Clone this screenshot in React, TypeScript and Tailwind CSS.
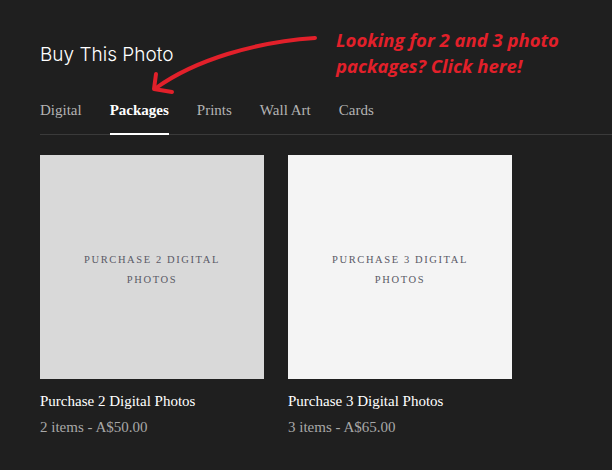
import React from "react";

const tabs = ["Digital", "Packages", "Prints", "Wall Art", "Cards"];

const products = [
  { label: ["PURCHASE 2 DIGITAL", "PHOTOS"], title: "Purchase 2 Digital Photos", price: "2 items - A$50.00", bg: "bg-[#d9d9d9]" },
  { label: ["PURCHASE 3 DIGITAL", "PHOTOS"], title: "Purchase 3 Digital Photos", price: "3 items - A$65.00", bg: "bg-[#f4f4f4]" },
];

export default function App() {
  return (
    <div className="relative w-[612px] h-[470px] overflow-hidden bg-[#1f1f1f]">
      <div className="pl-[40px] pt-[42px]">
        <h1 className="text-[19px] leading-[26px] text-white font-light" style={{ fontFamily: "Inter, 'Open Sans', sans-serif" }}>
          Buy This Photo
        </h1>
        <div className="mt-[32px] flex gap-[28px] border-b border-[#3a3a3a]" style={{ fontFamily: "'Liberation Serif', serif" }}>
          {tabs.map((t) => (
            <div
              key={t}
              className={
                "pb-[13px] text-[15px] leading-[20px] " +
                (t === "Packages" ? "text-white font-bold border-b-2 border-white -mb-[1px]" : "text-[#b3b3b3] border-b-2 border-transparent -mb-[1px]")
              }
            >
              {t}
            </div>
          ))}
        </div>
        <div className="mt-[20px] flex gap-[24px]" style={{ fontFamily: "'Liberation Serif', serif" }}>
          {products.map((p) => (
            <div key={p.title} className="w-[224px]">
              <div className={"w-[224px] h-[224px] pt-[6px] flex flex-col items-center justify-center " + p.bg}>
                {p.label.map((l) => (
                  <div key={l} className="text-[10.5px] leading-[20px] tracking-[1.6px] text-[#5a5a66]">
                    {l}
                  </div>
                ))}
              </div>
              <div className="mt-[12px] text-[15px] leading-[20px] text-white">{p.title}</div>
              <div className="mt-[6px] text-[15px] leading-[20px] text-[#a8a8a8]">{p.price}</div>
            </div>
          ))}
        </div>
      </div>

      <div
        className="absolute left-[336px] top-[27px] text-[18.5px] leading-[26px] font-bold italic text-[#e2202a]"
        style={{ fontFamily: "'Open Sans', sans-serif" }}
      >
        Looking for 2 and 3 photo
        <br />
        packages? Click here!
      </div>

      <svg className="absolute left-0 top-0" width="612" height="470" viewBox="0 0 612 470" fill="none">
        <path d="M315 38 C 255 42, 195 60, 156 88" stroke="#e2202a" strokeWidth="4" strokeLinecap="round" />
        <path d="M156 74 L 154 89 L 172 92" stroke="#e2202a" strokeWidth="4" strokeLinecap="round" strokeLinejoin="round" />
      </svg>
    </div>
  );
}
